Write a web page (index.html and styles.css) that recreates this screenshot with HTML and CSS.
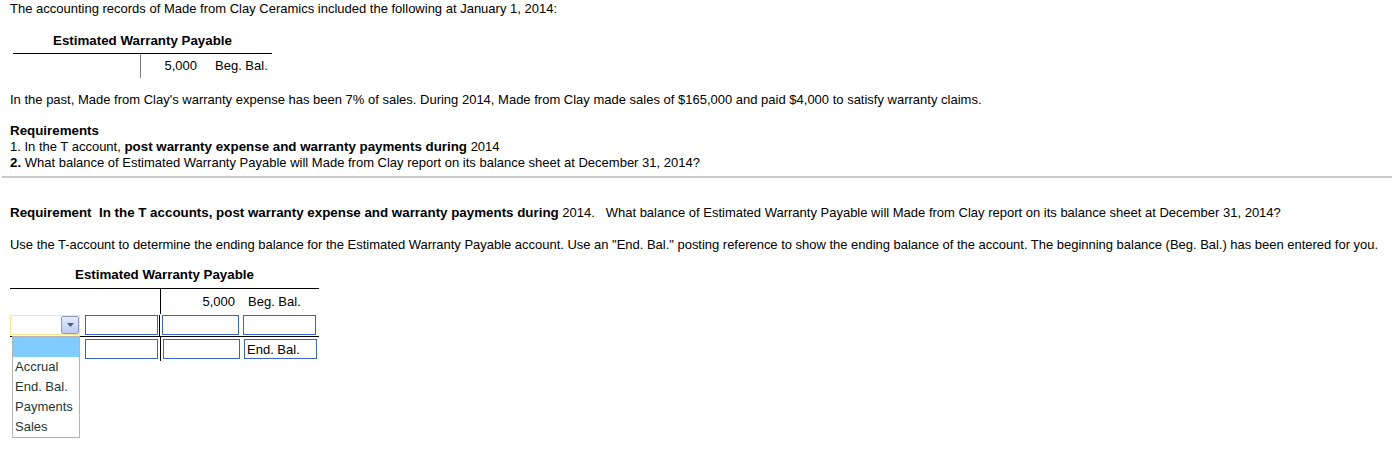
FILE: index.html
```html
<!DOCTYPE html>
<html>
<head>
<meta charset="utf-8">
<link rel="stylesheet" href="styles.css">
</head>
<body>
<div class="problem">
  <p class="intro">The accounting records of Made from Clay Ceramics included the following at January 1, 2014:</p>
  <div class="tacct1">
    <div class="ttitle1">Estimated Warranty Payable</div>
    <div class="trow1">
      <div class="tleft1"></div>
      <div class="tright1"><span class="amt1">5,000</span><span class="ref1">Beg. Bal.</span></div>
    </div>
  </div>
  <p class="past">In the past, Made from Clay's warranty expense has been 7% of sales. During 2014, Made from Clay made sales of $165,000 and paid $4,000 to satisfy warranty claims.</p>
  <div class="reqs">
    <div class="bold">Requirements</div>
    <div>1. In the T account, <b>post warranty expense and warranty payments during</b> 2014</div>
    <div><b>2.</b> What balance of Estimated Warranty Payable will Made from Clay report on its balance sheet at December 31, 2014?</div>
  </div>
</div>
<div class="sep"></div>
<div class="answer">
  <p class="reqline"><b>Requirement&nbsp; In the T accounts, post warranty expense and warranty payments during</b> 2014.&nbsp;&nbsp; What balance of Estimated Warranty Payable will Made from Clay report on its balance sheet at December 31, 2014?</p>
  <p class="useline">Use the T-account to determine the ending balance for the Estimated Warranty Payable account. Use an "End. Bal." posting reference to show the ending balance of the account. The beginning balance (Beg. Bal.) has been entered for you.</p>
  <div class="tacct2">
    <div class="ttitle2">Estimated Warranty Payable</div>
    <div class="row r1">
      <div class="left"></div>
      <div class="right"><span class="amt2">5,000</span><span class="ref2">Beg. Bal.</span></div>
    </div>
    <div class="row r2">
      <div class="left">
        <div class="selwrap">
          <div class="sel"><span class="selbtn"><svg width="7" height="4" viewBox="0 0 7 4"><polygon points="0,0 7,0 3.5,4" fill="#4b5a7c"/></svg></span></div>
          <div class="droplist">
            <div class="opt hl">&nbsp;</div>
            <div class="opt">Accrual</div>
            <div class="opt">End. Bal.</div>
            <div class="opt">Payments</div>
            <div class="opt">Sales</div>
          </div>
        </div>
        <input class="box wl" type="text">
      </div>
      <div class="right">
        <input class="box wa" type="text">
        <input class="box wr" type="text">
      </div>
    </div>
    <div class="row r3">
      <div class="left"><span class="spacer"></span><input class="box wl" type="text"></div>
      <div class="right">
        <input class="box wa" type="text">
        <input class="box wr" type="text" value="End. Bal.">
      </div>
    </div>
  </div>
</div>
</body>
</html>
```
FILE: styles.css
```css
html, body { min-height: 100%; }
body {
  margin: 0;
  min-height: 459px;
  font-family: "Liberation Sans", Arial, sans-serif;
  font-size: 13px;
  line-height: 14px;
  color: #000;
  background: #fff;
}
p { margin: 0; white-space: nowrap; }
b, .bold { font-weight: bold; font-size: 13.35px; }

.problem { padding: 0 10px; }
.intro { padding-top: 2px; }

.tacct1 { width: 259px; margin: 18px 0 0 3px; }
.ttitle1 {
  font-weight: bold;
  font-size: 13.35px;
  text-align: center;
  padding-bottom: 5px;
  border-bottom: 1px solid #000;
}
.trow1 { display: flex; height: 24px; }
.tleft1 { width: 127px; border-right: 1px solid #808080; }
.tright1 { display: flex; padding-top: 5px; }
.amt1 { width: 56px; text-align: right; }
.ref1 { margin-left: 18px; }

.past { margin-top: 15px; }
.reqs { margin-top: 16px; line-height: 16px; }

.sep { margin: 5px 0 0 2px; height: 2px; background: #c8c8c8; }

.answer { padding: 0 10px; }
.reqline { margin-top: 28px; }
.useline { margin-top: 18px; letter-spacing: -0.02px; }

.tacct2 { width: 309px; margin-top: 16px; }
.ttitle2 {
  font-weight: bold;
  font-size: 13.35px;
  text-align: center;
  padding-bottom: 6px;
  border-bottom: 1px solid #000;
}
.row { display: flex; }
.left { width: 150px; display: flex; align-items: flex-start; }
.right {
  width: 158px;
  border-left: 1px solid #000;
  display: flex;
  align-items: flex-start;
  padding-left: 2px;
}
.r1 .right { padding-top: 6px; height: 25px; box-sizing: border-box; }
.amt2 { width: 72px; text-align: right; }
.ref2 { margin-left: 13px; }

.r2 { border-bottom: 1px solid #000; height: 23px; padding-top: 1px; box-sizing: border-box; }
.r2 .left, .r2 .right { height: 22px; }
.r3 { height: 24px; }
.r3 .left, .r3 .right { padding-top: 2px; box-sizing: border-box; height: 24px; }

.box {
  box-sizing: border-box;
  height: 20px;
  border: 1px solid #3a66c6;
  background: #fff;
  margin: 0;
  padding: 0 2px;
  font-family: "Liberation Sans", Arial, sans-serif;
  font-size: 13px;
  color: #000;
  outline: none;
}
.wl { width: 73px; margin-left: 5px; }
.wa { width: 77px; }
.wr { width: 73px; margin-left: 4px; }
.spacer { width: 70px; }

.selwrap { position: relative; width: 70px; height: 20px; z-index: 5; }
.sel {
  box-sizing: border-box;
  width: 70px;
  height: 20px;
  border: 1px solid #ffe48c;
  background: #fff;
  display: flex;
  justify-content: flex-end;
}
.selbtn {
  box-sizing: border-box;
  width: 18px;
  height: 18px;
  border: 1px solid #8c9ac0;
  border-radius: 2px;
  background: linear-gradient(#e4ebfb, #bccbf0);
  display: flex;
  align-items: center;
  justify-content: center;
}
.droplist {
  position: absolute;
  left: 2px;
  top: 21px;
  width: 68px;
  box-sizing: border-box;
  border: 1px solid #b4b4b4;
  background: #fff;
}
.opt {
  height: 20px;
  line-height: 20px;
  padding-left: 2px;
  color: #1c3838;
}
.opt.hl { background: #80ccff; }
```
